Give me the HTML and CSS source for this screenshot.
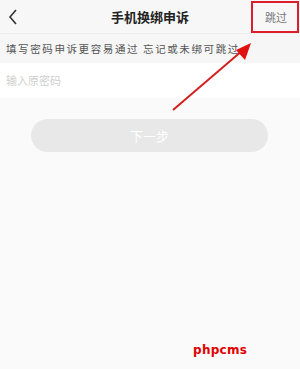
FILE: index.html
```html
<!DOCTYPE html>
<html lang="zh">
<head>
<meta charset="utf-8">
<link rel="stylesheet" href="styles.css">
</head>
<body>
<div class="page">
  <header class="topbar">
    <svg class="back" width="10" height="16" viewBox="0 0 10 16"><path d="M8 1 L2 8 L8 15" fill="none" stroke="#333" stroke-width="1.6"/></svg>
    <h1 class="title">手机换绑申诉</h1>
    <span class="skip">跳过</span>
  </header>
  <div class="hint">填写密码申诉更容易通过 忘记或未绑可跳过</div>
  <div class="field">输入原密码</div>
  <div class="actions"><button class="next">下一步</button></div>
  <div class="mark">phpcms</div>
  <div class="highlight"></div>
  <svg class="arrow" width="300" height="369" viewBox="0 0 300 369">
    <line x1="173" y1="110" x2="243" y2="50" stroke="#d41f1f" stroke-width="2"/>
    <polygon points="251,43 236,50 245,60" fill="#e01010"/>
  </svg>
</div>
</body>
</html>
```
FILE: styles.css
```css
html, body { margin: 0; padding: 0; }
body { background: #fafafa; font-family: "Noto Sans CJK SC", "Noto Sans", sans-serif; }
.page { position: relative; width: 300px; height: 369px; overflow: hidden; background: #fafafa; }
.topbar { height: 34px; background: #f7f7f7; display: flex; align-items: center; justify-content: center; position: relative; border-bottom: 1px solid #efefef; box-sizing: border-box; }
.back { position: absolute; left: 8px; top: 9px; }
.title { margin: 0; font-size: 13px; font-weight: bold; color: #222; }
.skip { position: absolute; right: 13px; top: 9px; font-size: 11px; color: #777; }
.hint { height: 29px; line-height: 30px; padding-left: 6px; font-size: 10.5px; letter-spacing: 1.6px; color: #555; background: #f6f6f6; }
.field { height: 35px; line-height: 35px; padding-left: 6px; font-size: 11px; color: #cfcfcf; background: #fff; }
.actions { padding-top: 21px; display: flex; justify-content: center; }
.next { width: 237px; height: 33px; border: none; border-radius: 17px; background: #e8e8e8; color: #fff; font-size: 13px; font-family: inherit; margin-left: -1px; }
.mark { position: absolute; left: 193px; top: 343px; font-family: "DejaVu Sans", sans-serif; font-weight: bold; font-size: 12px; color: #e00000; letter-spacing: 0.3px; }
.highlight { position: absolute; left: 251px; top: 1px; width: 44px; height: 28px; border: 2px solid #dd1e2a; }
.arrow { position: absolute; left: 0; top: 0; pointer-events: none; }
```
